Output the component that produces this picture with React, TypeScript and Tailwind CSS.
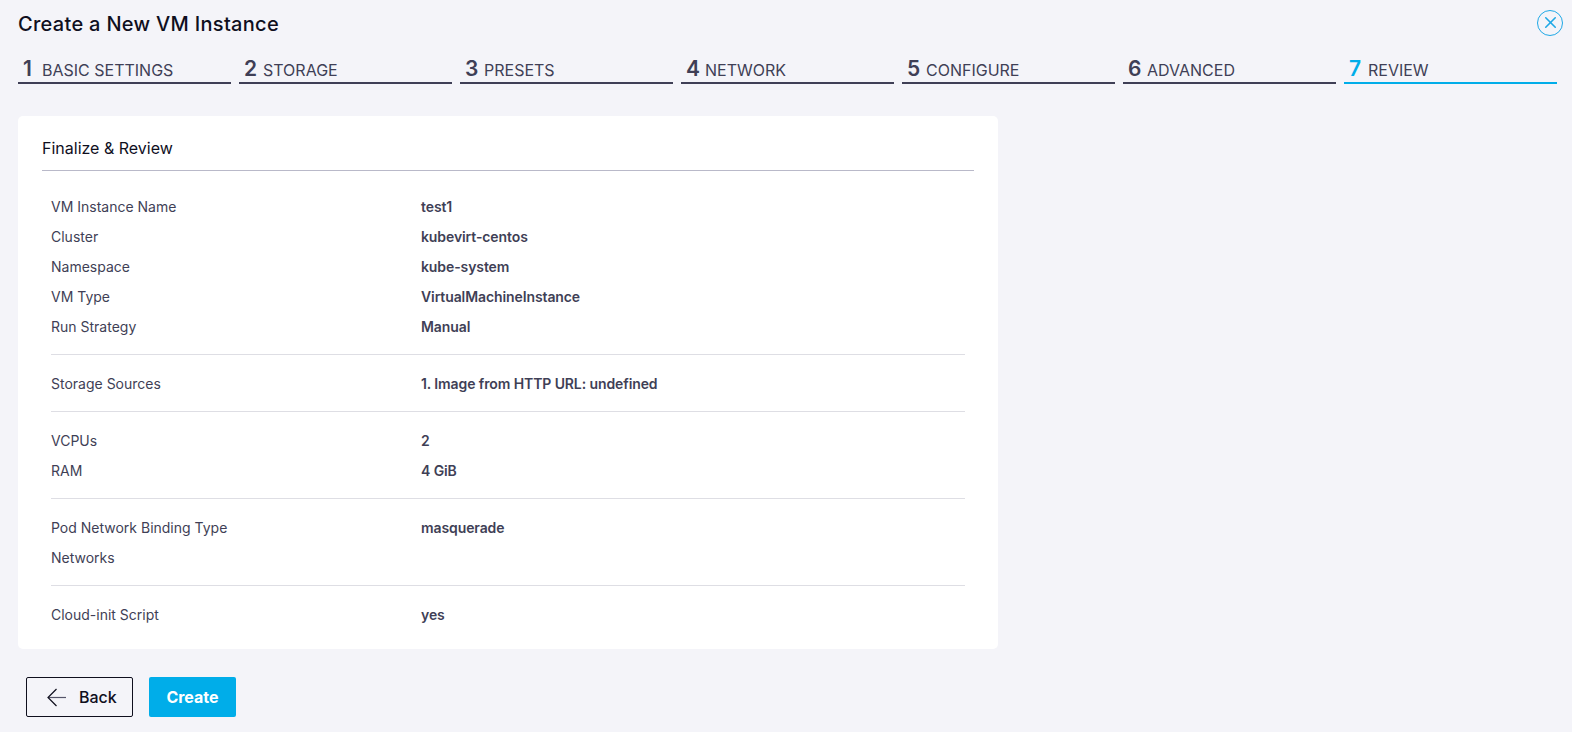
import { X } from 'lucide-react'

const STEPS = ['BASIC SETTINGS', 'STORAGE', 'PRESETS', 'NETWORK', 'CONFIGURE', 'ADVANCED', 'REVIEW']

const SECTIONS = [
  [
    ['VM Instance Name', 'test1'],
    ['Cluster', 'kubevirt-centos'],
    ['Namespace', 'kube-system'],
    ['VM Type', 'VirtualMachineInstance'],
    ['Run Strategy', 'Manual'],
  ],
  [['Storage Sources', '1. Image from HTTP URL: undefined']],
  [
    ['VCPUs', '2'],
    ['RAM', '4 GiB'],
  ],
  [
    ['Pod Network Binding Type', 'masquerade'],
    ['Networks', ''],
  ],
  [['Cloud-init Script', 'yes']],
]

export default function App() {
  return (
    <div className="h-[732px] overflow-hidden bg-[#f4f4f9] font-['Inter',sans-serif] text-[#3f3f56]">
      <div className="flex h-[48px] items-center justify-between pl-[18px] pr-[9px]">
        <h1 className="text-[20px] font-medium tracking-[0.3px] text-[#0f0f1e]">Create a New VM Instance</h1>
        <button type="button" className="mb-[3px] flex size-[26px] items-center justify-center rounded-full border-[1.5px] border-[#1fa8e6] text-[#1fa8e6]">
          <X size={19} strokeWidth={2} />
        </button>
      </div>

      <div className="ml-[18px] flex w-[1539px] gap-2">
        {STEPS.map((s, i) => {
          const active = i === STEPS.length - 1
          return (
            <div
              key={s}
              className={`flex h-[36px] flex-1 items-baseline border-b-2 pl-[5px] pt-[9px] ${
                active ? 'border-[#00ade9]' : 'border-[#3f3f56]'
              }`}
            >
              <span className={`w-[19px] text-[21px] font-semibold leading-[24px] ${active ? 'text-[#00ade9]' : ''}`}>{i + 1}</span>
              <span className="text-[16px] leading-[24px]">{s}</span>
            </div>
          )
        })}
      </div>

      <div className="ml-[18px] mt-[32px] h-[533px] w-[980px] rounded-[5px] bg-white px-6">
        <div className="flex h-[55px] items-center border-b border-[#b9b9c9] pt-[10px] text-[16px] text-[#0f0f1e]">Finalize &amp; Review</div>
        <div className="px-[9px] pt-[21px]">
          {SECTIONS.map((rows, i) => (
            <div key={i} className={i > 0 ? 'mt-[12px] border-t border-[#dedee4] pt-[14px]' : ''}>
              {rows.map(([label, value]) => (
                <div key={label} className="flex h-[30px] items-center pb-[1px] text-[14px]">
                  <div className="w-[370px]">{label}</div>
                  <div className="font-semibold tracking-[-0.1px]">{value}</div>
                </div>
              ))}
            </div>
          ))}
        </div>
      </div>

      <div className="ml-[26px] mt-[28px] flex gap-4">
        <button type="button" className="flex h-[40px] w-[107px] items-center gap-[13px] rounded-[2px] border border-[#0f0f1e] pl-[20px] text-[16px] font-medium text-[#0f0f1e]">
          <svg width="19" height="19" viewBox="0 0 19 19" fill="none" strokeWidth="1.2">
            <path d="M19 9.5H1" stroke="#55556a" />
            <path d="M9.5 1L1 9.5 9.5 18" stroke="#0f0f1e" />
          </svg>
          Back
        </button>
        <button type="button" className="h-[40px] w-[87px] rounded-[2px] bg-[#00ade9] text-[16px] font-bold text-white">Create</button>
      </div>
    </div>
  )
}
